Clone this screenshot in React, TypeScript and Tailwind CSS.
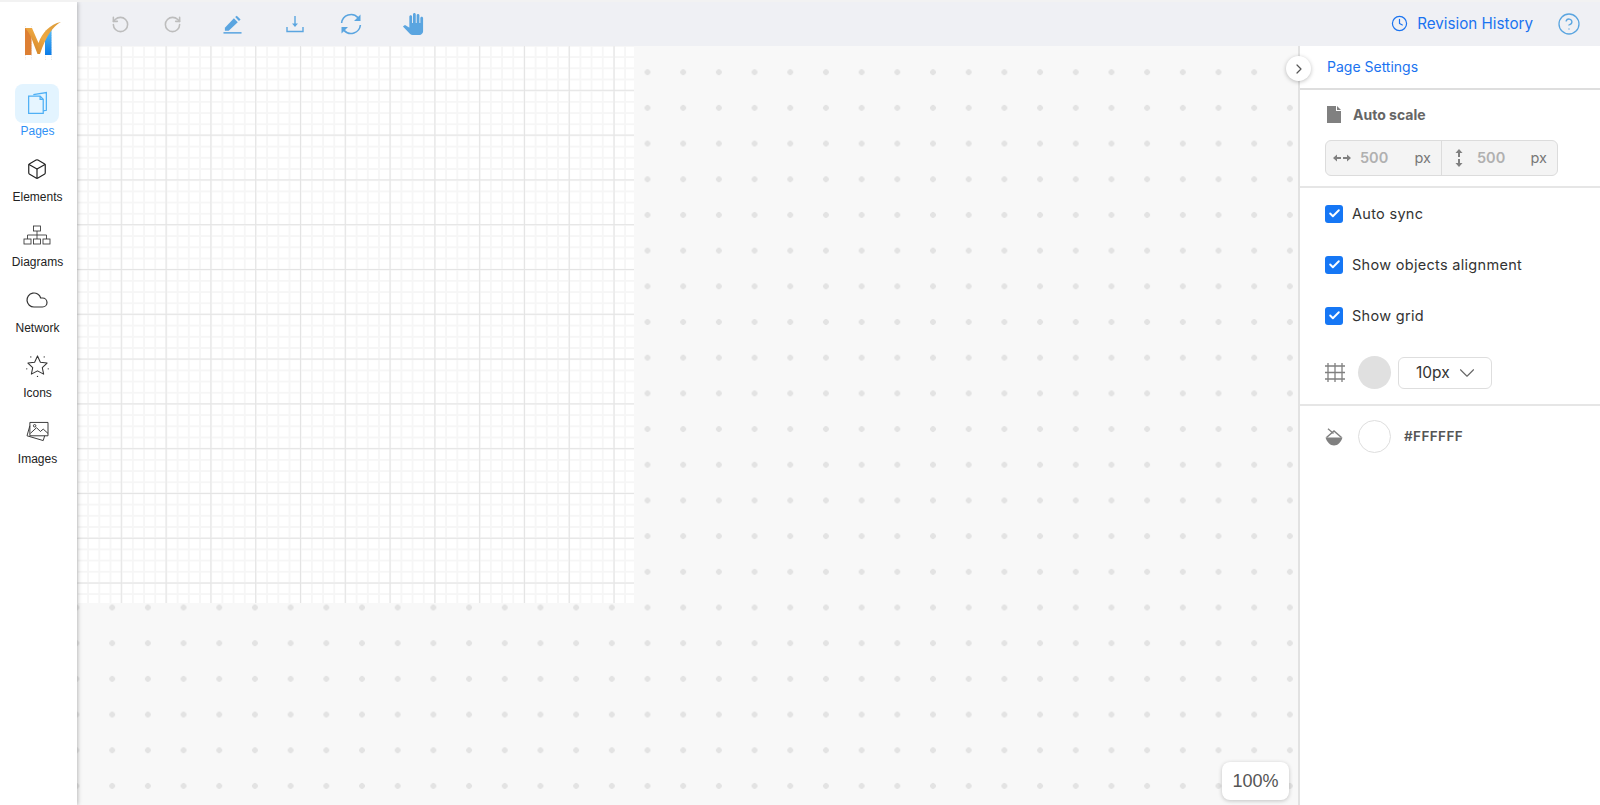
import { Box, ChevronDown, ChevronRight, CircleHelp, Clock, Cloud, RotateCcw, RotateCw, Check } from 'lucide-react';
import { MdPanTool } from 'react-icons/md';
import type { ReactNode } from 'react';

function Logo() {
  return (
    <svg viewBox="20 18 45 45" className="w-[45px] h-[45px] ml-[20px] mt-[16px] self-start">
      <defs>
        <linearGradient id="blueLeg" x1="0" y1="0" x2="0" y2="1">
          <stop offset="0" stopColor="#5cc0f5" />
          <stop offset="1" stopColor="#0a7be8" />
        </linearGradient>
        <linearGradient id="swoosh" x1="0" y1="1" x2="1" y2="0">
          <stop offset="0" stopColor="#c9771f" />
          <stop offset="0.5" stopColor="#efa942" />
          <stop offset="1" stopColor="#d99a3a" />
        </linearGradient>
      </defs>
      <g stroke="#d8d8d8" strokeWidth="0.6" strokeDasharray="1.2 1.2">
        <path d="M25.5 26V60M31.5 26V60M45.5 30V60M51.5 30V60" />
      </g>
      <path d="M25 28H31.5V55H25Z" fill="#dd7f33" />
      <path d="M45 36 L51.5 28V55H45Z" fill="url(#blueLeg)" />
      <path d="M25 28H32 L38.5 43 C42 33 50 24 61 22 C53 26 46 36 40 54 H37.5 L31 37 C29 33 27 30 25 28Z" fill="url(#swoosh)" />
    </svg>
  );
}

function PagesIcon() {
  return (
    <svg viewBox="0 0 20 24" className="w-[21px] h-[25px]" fill="none" stroke="#4fb0f5" strokeWidth="1.2">
      <path d="M6 3.5 L18.5 1.5V18.5L15 19" />
      <path d="M1.5 5H12.5L15.5 8V21.5H1.5Z" fill="#e6f5ff" />
      <path d="M12.5 5V8H15.5" />
    </svg>
  );
}

function DiagramIcon() {
  return (
    <svg viewBox="0 0 28 20" className="w-[28px] h-[20px]" fill="none" stroke="#333" strokeWidth="0.85">
      <rect x="10.5" y="1" width="7" height="5" />
      <rect x="1" y="14" width="7" height="5" />
      <rect x="10.5" y="14" width="7" height="5" />
      <rect x="20" y="14" width="7" height="5" />
      <path d="M14 6V14M4.5 14V10H23.5V14" />
    </svg>
  );
}

function StarIcon() {
  return (
    <svg viewBox="0 0 24 24" className="w-[23px] h-[23px]" fill="none" stroke="#333" strokeWidth="1.1">
      <path d="M12 2 L15 8.6 L22 9.4 L17 14.2 L18.4 21 L12 17.6 L5.6 21 L7 14.2 L2 9.4 L9 8.6 Z" strokeLinejoin="round" />
      <g fill="#333" stroke="none">
        <circle cx="5" cy="3" r="0.7" />
        <circle cx="19" cy="3" r="0.7" />
        <circle cx="0.8" cy="15.5" r="0.7" />
        <circle cx="23.2" cy="15.5" r="0.7" />
        <circle cx="12" cy="23.4" r="0.7" />
      </g>
    </svg>
  );
}

function ImagesIcon() {
  return (
    <svg viewBox="0 0 24 22" className="w-[23px] h-[21px]" fill="none" stroke="#333" strokeWidth="1">
      <path d="M4 1.5H23V15.5H4Z" />
      <path d="M4 5 L1 15.5 L18 20.5 L19.5 15.5" />
      <path d="M4.5 13 L11 7 L15 11 L18 8.5 L23 13" />
      <circle cx="9" cy="5" r="1.3" />
    </svg>
  );
}

function NavItem({ icon, label, active }: { icon: ReactNode; label: string; active?: boolean }) {
  return (
    <div className="h-[65.6px] flex flex-col items-center shrink-0">
      <div className={`w-[44px] h-[39px] rounded-lg flex items-center justify-center ${active ? 'bg-[#e3f4ff]' : ''}`}>
        {icon}
      </div>
      <span className={`mt-[1px] text-[12px] leading-[15px] ${active ? 'text-[#2f90f5]' : 'text-[#222]'}`}>{label}</span>
    </div>
  );
}

function PenIcon() {
  return (
    <svg viewBox="0 0 20 20" className="w-[19px] h-[19px]" fill="#5aa5e0">
      <path d="M2 13.5 L11.5 3.5 L15.5 7.5 L6 16.5 H2Z" />
      <path d="M12.8 2.2 L14.5 0.8 L18.5 4.8 L16.8 6.3Z" />
      <rect x="0.5" y="18" width="19" height="1.6" />
    </svg>
  );
}

function TrayIcon() {
  return (
    <svg viewBox="0 0 18 18" className="w-[18px] h-[18px]" fill="none" stroke="#5aa5e0" strokeWidth="1.4">
      <path d="M9 1V11" />
      <path d="M6 8.5 L9 12 L12 8.5Z" fill="#5aa5e0" stroke="none" />
      <path d="M1 12V16.5H17V12" />
    </svg>
  );
}

function SyncIcon() {
  return (
    <svg viewBox="0 0 22 22" className="w-[22px] h-[22px]" fill="none" stroke="#5aa5e0" strokeWidth="1.6">
      <path d="M1.6 10 A9.5 9.5 0 0 1 18 4.6" />
      <path d="M20.4 12 A9.5 9.5 0 0 1 4 17.4" />
      <path d="M20.5 1.5 V8 H14Z M1.5 20.5 V14 H8Z" fill="#5aa5e0" stroke="none" />
    </svg>
  );
}

function FileIcon() {
  return (
    <svg viewBox="0 0 14 17" className="w-[14px] h-[17px]" fill="#808080">
      <path d="M0 0H9V5H14V17H0Z" />
      <path d="M10 0 L14 4H10Z" />
    </svg>
  );
}

function WidthIcon() {
  return (
    <svg viewBox="0 0 18 8" className="w-[18px] h-[8px]" fill="#808080">
      <path d="M0 4 L4 0.5V3H8V5H4V7.5Z" />
      <path d="M18 4 L14 0.5V3H10V5H14V7.5Z" />
    </svg>
  );
}

function HeightIcon() {
  return (
    <svg viewBox="0 0 8 18" className="w-[8px] h-[18px]" fill="#808080">
      <path d="M4 0 L7.5 4H5V8H3V4H0.5Z" />
      <path d="M4 18 L7.5 14H5V10H3V14H0.5Z" />
    </svg>
  );
}

function GridIcon() {
  return (
    <svg viewBox="0 0 20 19" className="w-[20px] h-[19px]" fill="none" stroke="#808080" strokeWidth="1.3">
      <path d="M3 0V19M10 0V19M17 0V19M0 3H20M0 9.5H20M0 16H20" />
    </svg>
  );
}

function BucketIcon() {
  return (
    <svg viewBox="0 0 18 18" className="w-[18px] h-[18px]" fill="none">
      <path d="M0.5 9.5H17.5C16 14 13 17.5 9 17.5C5 17.5 2 14 0.5 9.5Z" fill="#808080" />
      <path d="M1.5 9.5 L9 3 L16.5 9.5" stroke="#808080" strokeWidth="1.5" />
      <path d="M3 0.8 L8.5 5.5" stroke="#808080" strokeWidth="1.3" />
    </svg>
  );
}

function CheckRow({ label }: { label: string }) {
  return (
    <div className="h-[51px] flex items-center">
      <span className="w-[18px] h-[18px] rounded-[3px] bg-[#1677f5] flex items-center justify-center">
        <Check size={13} strokeWidth={3.5} color="#fff" />
      </span>
      <span className="ml-[9px] text-[14.5px] text-[#333] tracking-[0.3px]">{label}</span>
    </div>
  );
}

export default function App() {
  return (
    <div className="h-screen flex overflow-hidden border-t-2 border-[#f2f2f2] bg-white font-['Inter',sans-serif]">
      <aside className="w-[77px] shrink-0 flex flex-col items-center pr-[2px] bg-white z-10 shadow-[1px_0_4px_rgba(0,0,0,0.25)] font-['Liberation_Sans',sans-serif]">
        <Logo />
        <nav className="mt-[21px] flex flex-col">
          <NavItem icon={<PagesIcon />} label="Pages" active />
          <NavItem icon={<Box size={22} strokeWidth={1.3} color="#222" />} label="Elements" />
          <NavItem icon={<DiagramIcon />} label="Diagrams" />
          <NavItem icon={<Cloud size={24} strokeWidth={1.2} color="#333" />} label="Network" />
          <NavItem icon={<StarIcon />} label="Icons" />
          <NavItem icon={<ImagesIcon />} label="Images" />
        </nav>
      </aside>

      <div className="flex-1 min-w-0 flex flex-col">
        <header className="h-[44px] shrink-0 bg-[#eff0f4] flex items-center pl-[34px] pr-[19px]">
          <RotateCcw size={19} strokeWidth={2} color="#bdbdbd" />
          <RotateCw size={19} strokeWidth={2} color="#bdbdbd" className="ml-[33px]" />
          <span className="ml-[41px] flex"><PenIcon /></span>
          <span className="ml-[44px] flex"><TrayIcon /></span>
          <span className="ml-[36px] flex"><SyncIcon /></span>
          <MdPanTool size={22} color="#5aa5e0" className="ml-[40px]" />
          <div className="ml-auto flex items-center text-[#1a73f0]">
            <Clock size={17} strokeWidth={1.7} />
            <span className="ml-[9px] text-[15.2px]">Revision History</span>
          </div>
          <CircleHelp size={24} strokeWidth={1.3} color="#5aa5e0" className="ml-[24px]" />
        </header>

        <div className="flex-1 min-h-0 flex">
          <main className="relative flex-1 min-w-0 overflow-hidden bg-[#f8f8f8] bg-[radial-gradient(circle,#e3e3e3_2.6px,transparent_3.1px)] bg-[size:35.7px_35.7px] bg-[position:17.35px_8.35px]">
            <div className="w-[557px] h-[557px] bg-white bg-[linear-gradient(to_right,#e4e4e4_1.3px,transparent_1.3px),linear-gradient(to_bottom,#e4e4e4_1.3px,transparent_1.3px),linear-gradient(to_right,#f6f6f6_1.6px,transparent_1.6px),linear-gradient(to_bottom,#f6f6f6_1.6px,transparent_1.6px)] bg-[size:44.8px_44.8px,44.8px_44.8px,11.2px_11.2px,11.2px_11.2px] bg-[position:-1px_-1px]" />
            <div className="absolute right-[9px] bottom-[5px] w-[67px] h-[38px] rounded-lg bg-white shadow-[0_1px_4px_rgba(0,0,0,0.22)] flex items-center justify-center text-[18px] text-[#555] font-['Liberation_Sans',sans-serif]">
              100%
            </div>
          </main>

          <aside className="relative w-[302px] shrink-0 border-l-2 border-[#e2e2e2] bg-white">
            <button className="absolute left-[-14px] top-[10px] w-[25px] h-[25px] rounded-full bg-white shadow-[0_1px_4px_rgba(0,0,0,0.25)] flex items-center justify-center">
              <ChevronRight size={16} strokeWidth={1.8} color="#555" />
            </button>

            <div className="h-[44px] border-b-2 border-[#dedede] pl-[27px] pb-[2px] flex items-center text-[14px] text-[#1a73f0]">
              Page Settings
            </div>

            <section className="h-[98px] border-b-2 border-[#e6e6e6] pl-[25px] pt-[16px]">
              <div className="flex items-center h-[17px] pl-[2px]">
                <FileIcon />
                <span className="ml-[12px] text-[14px] font-bold text-[#666]">Auto scale</span>
              </div>
              <div className="mt-[17px] w-[233px] h-[36px] flex rounded-md border border-[#dcdcdc] bg-[#f4f4f4] text-[14px]">
                <div className="w-[116px] flex items-center pl-[7px] border-r border-[#dcdcdc]">
                  <WidthIcon />
                  <span className="ml-[9px] text-[14.5px] font-semibold text-[#b0b0b0]">500</span>
                  <span className="ml-auto mr-[10px] text-[14.5px] text-[#777]">px</span>
                </div>
                <div className="flex-1 flex items-center pl-[13px]">
                  <HeightIcon />
                  <span className="ml-[14px] text-[14.5px] font-semibold text-[#b0b0b0]">500</span>
                  <span className="ml-auto mr-[10px] text-[14.5px] text-[#777]">px</span>
                </div>
              </div>
            </section>

            <section className="h-[218px] border-b-2 border-[#e6e6e6] pl-[25px]">
              <CheckRow label="Auto sync" />
              <CheckRow label="Show objects alignment" />
              <CheckRow label="Show grid" />
              <div className="flex items-center h-[33px] mt-[15px]">
                <GridIcon />
                <span className="ml-[13px] w-[33px] h-[33px] rounded-full bg-[#e0e0e0]" />
                <div className="ml-[7px] w-[94px] h-[32px] rounded-md border border-[#dedede] flex items-center pl-[17px] text-[15.5px] text-[#333]">
                  10px
                  <ChevronDown size={26} strokeWidth={1} color="#666" className="ml-[4px]" />
                </div>
              </div>
            </section>

            <div className="flex items-center h-[33px] mt-[14px] pl-[25px]">
              <BucketIcon />
              <span className="ml-[15px] w-[33px] h-[33px] rounded-full border border-[#dedede] bg-white" />
              <span className="ml-[13px] text-[13.5px] font-semibold text-[#555] tracking-[0.4px]">#FFFFFF</span>
            </div>
          </aside>
        </div>
      </div>
    </div>
  );
}
